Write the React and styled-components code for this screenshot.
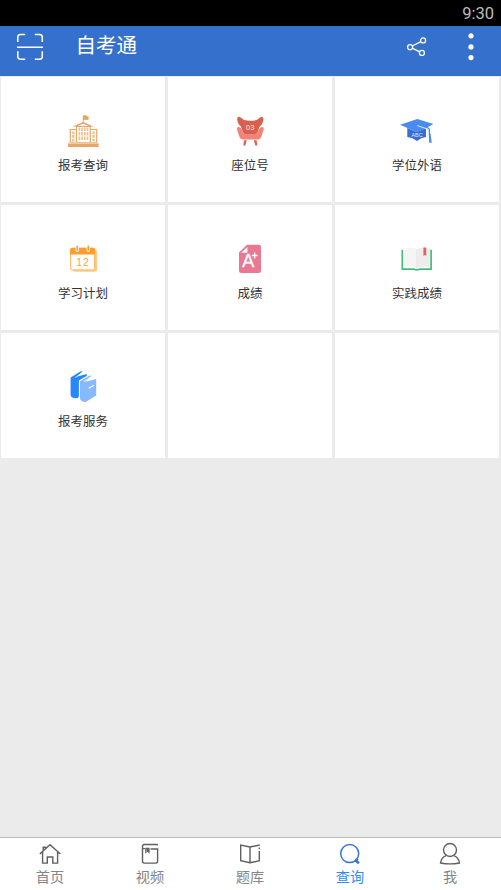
import React from 'react'
import styled, { createGlobalStyle } from 'styled-components';

const SchoolIcon = () => (
    <svg width="40" height="40" viewBox="0 0 40 40">
        <path d="M20.2 12V4.8h3.2v1h1.8v2.6H20.6" fill="#e8a766" stroke="#dc9c58" strokeWidth="0.7"/>
        <path d="M12.5 15.2L20.3 11.8L28 15.2" fill="none" stroke="#dfa060" strokeWidth="1.3"/>
        <path d="M10.3 15.3H30" stroke="#e8b27a" strokeWidth="0.9"/>
        <path d="M13.5 32V15.5H27.3V32M13.5 18.5H7.3V32M27.3 18.5H33.7V32" fill="none" stroke="#e5a96b" strokeWidth="1.2"/>
        <path d="M16.4 16.5V29.5M19 16.5V29.5M21.8 16.5V29.5M24.5 16.5V29.5" stroke="#efc28f" strokeWidth="1.7" strokeDasharray="3.6 0.9"/>
        <path d="M10.3 20.5V30.5M30.6 20.5V30.5" stroke="#efc28f" strokeWidth="2.4" strokeDasharray="2.7 0.9"/>
        <path d="M7 31.5H34" stroke="#eec292" strokeWidth="1"/>
        <rect x="5" y="32.4" width="30.6" height="3.6" fill="#e5a768"/>
    </svg>
)

const SeatIcon = () => (
    <svg width="40" height="40" viewBox="0 0 40 40">
        <path d="M14 29.3h2.7l-1.4 5.2h-2zM26.6 29.3h-2.7l1.4 5.2h2z" fill="#d9604f"/>
        <path d="M7.4 16.3Q10.5 15.3 12.2 19L13.5 22.5H27L28.5 19Q30.2 15.3 33.3 16.3Q34 18 33.4 19.5L31.6 25Q30.8 28.4 27.5 28.4H13.3Q10 28.4 9.2 25L7.3 19.5Q6.8 18 7.4 16.3Z" fill="#ee8578"/>
        <path d="M9.3 5.7Q12 7 14 9Q20.3 10.4 26.8 9Q28.8 7 31.3 5.7Q34 5.8 33.3 9.3Q32.6 13.8 29.5 15.7L27.4 21.5Q26.7 23 25 23H15.6Q13.9 23 13.2 21.5L11 15.7Q8 13.8 7.3 9.3Q6.6 5.8 9.3 5.7Z" fill="#d9604f"/>
        <text x="20.2" y="19.2" fontSize="7.4" textAnchor="middle" fill="#fde7e3" fontFamily="Liberation Sans, sans-serif">03</text>
    </svg>
)

const DegreeIcon = () => (
    <svg width="40" height="40" viewBox="0 0 40 40">
        <path d="M10.3 17L19.7 21L29 17V26Q24.2 26.5 20 30Q15.8 26.5 10.3 26Z" fill="#376fd0"/>
        <path d="M3.2 13.7L20.3 8L36.4 13L29.2 17L19.7 21.2Z" fill="#4a8bf0"/>
        <path d="M20.3 14.6L31 18.2L31.6 23" fill="none" stroke="#dfeafd" strokeWidth="1"/>
        <path d="M29 15.8L32.2 17.8L32.7 24" fill="none" stroke="#4a8bf0" strokeWidth="1.3"/>
        <path d="M31.7 23h1.8l1.3 8.7h-2.6z" fill="#4a8bf0"/>
        <text x="20" y="26" fontSize="5.4" textAnchor="middle" fill="#dce8fc" fontFamily="Liberation Sans, sans-serif">ABC</text>
    </svg>
)

const PlanIcon = () => (
    <svg width="40" height="40" viewBox="0 0 40 40">
        <rect x="9.5" y="10.5" width="24.7" height="22.3" rx="2.5" fill="#ffcb8b"/>
        <rect x="7.6" y="9.3" width="24" height="21.6" rx="2" fill="#fff" stroke="#ffb45e" strokeWidth="1"/>
        <path d="M7.1 15.5V11Q7.1 8.7 9.3 8.7H30Q32.1 8.7 32.1 11V15.5Z" fill="#fd9d2f"/>
        <path d="M14.2 7.2V11.3M25.3 7.2V11.3" stroke="#fff" strokeWidth="3.4" strokeLinecap="round"/>
        <path d="M14.2 7.3V11M25.3 7.3V11" stroke="#fd9d2f" strokeWidth="1.7" strokeLinecap="round"/>
        <text x="20" y="26.6" fontSize="10.5" letterSpacing="0.8" textAnchor="middle" fill="#fda541" fontFamily="Liberation Sans, sans-serif">12</text>
    </svg>
)

const ScoreIcon = () => (
    <svg width="40" height="40" viewBox="0 0 40 40">
        <path d="M17 5.8H28.5Q31 5.8 31 8.3V31.5Q31 34 28.5 34H11.5Q9 34 9 31.5V13.5Z" fill="#e97892"/>
        <path d="M17.4 8V13.7H11.2Z" fill="#fff"/>
        <text x="18.2" y="28.4" fontSize="18" textAnchor="middle" fill="#fff" stroke="#fff" strokeWidth="0.3" fontFamily="Liberation Sans, sans-serif">A</text>
        <path d="M24.7 13.6V19.4M21.8 16.5H27.6" stroke="#fff" strokeWidth="1.3"/>
    </svg>
)

const PracticeIcon = () => (
    <svg width="40" height="40" viewBox="0 0 40 40">
        <path d="M5.3 10.8V30.2H17.3Q19.7 31.6 22.2 30.2H34.1V10.8" fill="none" stroke="#43bd78" strokeWidth="1.7"/>
        <path d="M6.6 9.4Q14.5 7.6 19.7 10V29.2Q14 26.7 6.6 28.6Z" fill="#f5f5f5"/>
        <path d="M32.9 9.4Q25 7.6 19.7 10V29.2Q25.5 26.7 32.9 28.6Z" fill="#ededed"/>
        <path d="M19.7 10V29" stroke="#e3e3e3" strokeWidth="0.8"/>
        <path d="M26.4 8.4H29.2V17L27.8 16L26.4 17Z" fill="#f35b5b"/>
    </svg>
)

const ServiceIcon = () => (
    <svg width="40" height="40" viewBox="0 0 40 40">
        <path d="M7.6 10.5L16.5 5Q18.3 3.9 19.7 4.5L13.5 9.8L23.8 7V15L15 31L12 31.3Q7.6 30.6 7.6 27.5Z" fill="#2987fc"/>
        <path d="M12.3 10.6L19.2 5.8" stroke="#fff" strokeWidth="0.7"/>
        <path d="M15.9 13.6L21 10.5L24.8 8.5L25.8 9L33.5 11.8V29L22.2 36L18.5 34.5L15.9 33Z" fill="#fff"/>
        <path d="M17 14.3L25.8 9Q27.5 8 28.8 8.7L22 14.8L33.2 12V28.5L22.6 35Q17 34.7 17 31Z" fill="#87b9fd"/>
        <path d="M21 14.5L28.2 9.4" stroke="#fff" strokeWidth="0.7"/>
        <path d="M25.7 21.2L30.8 18.2" stroke="#fff" strokeWidth="1.2"/>
    </svg>
)

const ScanIcon = () => (
    <svg width="28" height="28" viewBox="0 0 28 28" fill="none" stroke="#fff" strokeWidth="1.5">
        <path d="M1.8 9V4.3Q1.8 1.6 4.5 1.6H9.2M18.8 1.6H23.5Q26.3 1.6 26.3 4.3V9M26.3 18.3V23.5Q26.3 26.3 23.5 26.3H18.8M9.2 26.3H4.5Q1.8 26.3 1.8 23.5V18.3M1 14.3H27"/>
    </svg>
)

const ShareIcon = () => (
    <svg width="22" height="22" viewBox="0 0 22 22" fill="none" stroke="#fff" strokeWidth="1.3">
        <circle cx="4.1" cy="11.2" r="2.5"/>
        <circle cx="17.1" cy="4.4" r="2.5"/>
        <circle cx="15.9" cy="16.9" r="2.5"/>
        <path d="M6.3 10L14.9 5.6M6.3 12.2L13.7 15.8"/>
    </svg>
)

const MoreIcon = () => (
    <svg width="6" height="28" viewBox="0 0 6 28" fill="#fff">
        <circle cx="3" cy="2.8" r="2.6"/>
        <circle cx="3" cy="13.9" r="2.6"/>
        <circle cx="3" cy="24.6" r="2.6"/>
    </svg>
)

const HomeIcon = () => (
    <svg width="24" height="24" viewBox="0 0 24 24" fill="none" stroke="#606060" strokeWidth="1.4">
        <path d="M1.8 12L12 2.8L22.4 12M5.2 9V5.2H7.4V7M4.6 10V21.1H9.3V15H14.8V21.1H19.6V10"/>
    </svg>
)

const VideoIcon = () => (
    <svg width="24" height="24" viewBox="0 0 24 24" fill="none" stroke="#606060" strokeWidth="1.4">
        <path d="M19.8 2.5H6.5Q4.5 2.5 4.5 4.5V19.3Q4.5 21.1 6.3 21.1H17.7Q19.6 21.1 19.6 19.3V7H12.5M4.7 6.6H7M19.3 2.5V3.5"/>
        <path d="M7.2 5.8H11.6V11.8L9.4 9.8L7.2 11.8Z" fill="#606060" stroke="none"/>
        <path d="M8.4 6.5V10" stroke="#bbb" strokeWidth="0.6"/>
    </svg>
)

const BankIcon = () => (
    <svg width="24" height="24" viewBox="0 0 24 24" fill="none" stroke="#606060" strokeWidth="1.4">
        <path d="M12 5L2.7 3V18.8L12 20.8L21.3 18.8V9M12 5V20.8M12 5L21.8 3M21.3 5.5V7.2"/>
    </svg>
)

const SearchIcon = () => (
    <svg width="24" height="24" viewBox="0 0 24 24" fill="none" stroke="#3a74d4">
        <circle cx="11.7" cy="11.6" r="9" strokeWidth="1.5"/>
        <path d="M17 18L20.9 21.2M19.2 16.7L18.3 19" strokeWidth="2.7"/>
    </svg>
)

const MeIcon = () => (
    <svg width="24" height="24" viewBox="0 0 24 24" fill="none" stroke="#606060" strokeWidth="1.4">
        <circle cx="12" cy="8" r="6.5"/>
        <path d="M8.2 13.6Q3.2 15.5 2.5 21Q12 22.8 21.5 21Q20.8 15.5 15.8 13.6"/>
    </svg>
)

const entries = [
    { label: '报考查询', Icon: SchoolIcon },
    { label: '座位号', Icon: SeatIcon },
    { label: '学位外语', Icon: DegreeIcon },
    { label: '学习计划', Icon: PlanIcon },
    { label: '成绩', Icon: ScoreIcon },
    { label: '实践成绩', Icon: PracticeIcon },
    { label: '报考服务', Icon: ServiceIcon },
    { label: '' },
    { label: '' },
]

const tabs = [
    { label: '首页', Icon: HomeIcon },
    { label: '视频', Icon: VideoIcon },
    { label: '题库', Icon: BankIcon },
    { label: '查询', Icon: SearchIcon, active: true },
    { label: '我', Icon: MeIcon },
]

function App() {
    return (
        <StyledApp>
            <GlobalStyle/>
            <StatusBar>9:30</StatusBar>
            <Header>
                <ScanIcon/>
                <h1>自考通</h1>
                <Actions>
                    <ShareIcon/>
                    <MoreIcon/>
                </Actions>
            </Header>
            <Grid>
                {entries.map(({label, Icon}, i) => (
                    <Cell key={i}>
                        {Icon && <Icon/>}
                        {label && <p>{label}</p>}
                    </Cell>
                ))}
            </Grid>
            <TabBar>
                {tabs.map(({label, Icon, active}) => (
                    <Tab key={label} $active={active}>
                        <Icon/>
                        <span>{label}</span>
                    </Tab>
                ))}
            </TabBar>
        </StyledApp>
    )
}

const GlobalStyle = createGlobalStyle`
    *{
        box-sizing: border-box;
        margin: 0;
        padding: 0;
    }
    body{
        font-family: "Noto Sans CJK SC", sans-serif;
        background: #ebebeb;
    }
    svg{
        display: block;
        flex-shrink: 0;
    }
`;

const StyledApp = styled.div`
    display: flex;
    flex-direction: column;
    width: 501px;
    height: 890px;
    background: #ebebeb;
    overflow: hidden;
`;

const StatusBar = styled.div`
    height: 26px;
    padding-right: 7px;
    background: #000;
    color: #bdbdbd;
    font-family: Roboto, sans-serif;
    font-size: 16.5px;
    line-height: 28px;
    text-align: right;
`;

const Header = styled.header`
    display: flex;
    align-items: flex-start;
    height: 50px;
    padding: 7px 27px 0 15.5px;
    background: #3570cd;
    >h1{
        margin-left: 32px;
        color: #fff;
        font-size: 20.5px;
        font-weight: 400;
        line-height: 22px;
    }
`;

const Actions = styled.div`
    display: flex;
    align-items: flex-start;
    gap: 40px;
    margin-left: auto;
    >svg:first-child{
        margin-top: 3px;
    }
`;

const Grid = styled.main`
    display: grid;
    flex: 1;
    grid-template-columns: repeat(3, 164px);
    grid-auto-rows: 125px;
    align-content: start;
    gap: 3px;
    padding: 1px 2px 0 1px;
`;

const Cell = styled.div`
    display: flex;
    flex-direction: column;
    align-items: center;
    padding-top: 34px;
    background: #fff;
    >p{
        margin-top: 5px;
        color: #333;
        font-size: 12.5px;
        line-height: 18px;
    }
`;

const TabBar = styled.nav`
    display: flex;
    height: 53px;
    padding-right: 1px;
    border-top: 1px solid #b9b9b9;
    background: #fff;
`;

const Tab = styled.div`
    display: flex;
    flex: 1;
    flex-direction: column;
    align-items: center;
    padding-top: 4px;
    color: ${({$active}) => $active ? '#2b8df5' : '#858585'};
    >span{
        font-size: 14.2px;
        line-height: 20px;
    }
`;

export default App
